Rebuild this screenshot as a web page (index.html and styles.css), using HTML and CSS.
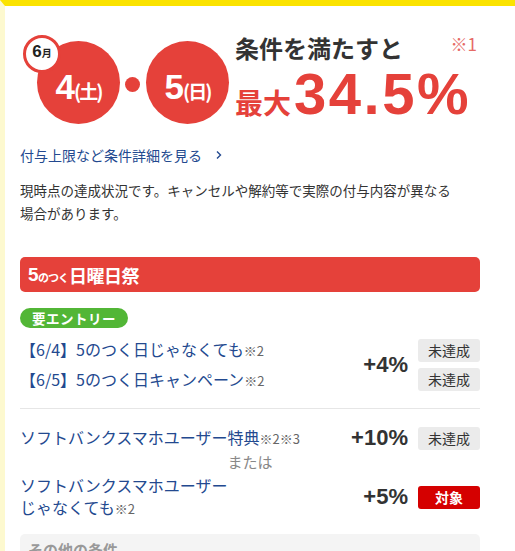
FILE: index.html
```html
<!DOCTYPE html>
<html lang="ja">
<head>
<meta charset="utf-8">
<title>5のつく日曜日祭</title>
<link rel="stylesheet" href="styles.css">
</head>
<body>
<div class="wrap">
  <div class="banner">
    <div class="dates">
      <div class="circle c1">
        <span class="month"><b>6</b>月</span>
        <span class="day"><b>4</b><i>(土)</i></span>
      </div>
      <span class="dot"></span>
      <div class="circle c2">
        <span class="day"><b>5</b><i>(日)</i></span>
      </div>
    </div>
    <div class="headline">
      <div class="cond"><span>条件を満たすと</span><span class="note">※1</span></div>
      <div class="max"><span class="max-label">最大</span><span class="max-num">34.5%</span></div>
    </div>
  </div>

  <a class="detail-link" href="#">付与上限など条件詳細を見る<svg class="chev" width="8" height="10" viewBox="0 0 8 10"><polyline points="2,1.5 5.5,5 2,8.5" fill="none" stroke="#23498f" stroke-width="1.4"/></svg></a>

  <p class="desc">現時点の達成状況です。キャンセルや解約等で実際の付与内容が異なる<br>場合があります。</p>

  <div class="section-head"><span class="five">5</span><span class="small">のつく</span>日曜日祭</div>

  <div class="pill">要エントリー</div>

  <div class="group g1">
    <div class="names">
      <a href="#" class="name">【6/4】5のつく日じゃなくても<span class="ref">※2</span></a>
      <a href="#" class="name">【6/5】5のつく日キャンペーン<span class="ref">※2</span></a>
    </div>
    <div class="rate">+4%</div>
    <div class="badges">
      <span class="badge">未達成</span>
      <span class="badge">未達成</span>
    </div>
  </div>

  <div class="divider"></div>

  <div class="group g2">
    <div class="names">
      <a href="#" class="name">ソフトバンクスマホユーザー特典<span class="ref">※2※3</span></a>
    </div>
    <div class="rate">+10%</div>
    <div class="badges"><span class="badge">未達成</span></div>
  </div>

  <div class="or">または</div>

  <div class="group g3">
    <div class="names">
      <a href="#" class="name two">ソフトバンクスマホユーザー<br>じゃなくても<span class="ref">※2</span></a>
    </div>
    <div class="rate">+5%</div>
    <div class="badges"><span class="badge on">対象</span></div>
  </div>

  <div class="other">その他の条件</div>
</div>
</body>
</html>
```

FILE: styles.css
```css
html, body {
  margin: 0;
  padding: 0;
  overflow: hidden;
  background: #fff;
}
body {
  font-family: "Noto Sans CJK JP", "Noto Sans", sans-serif;
  color: #333;
}
.wrap {
  border-top: 6px solid #fbe300;
  border-left: 5px solid #fdf9cf;
  padding: 0 35px 0 15px;
  min-height: 600px;
}

/* banner */
.banner {
  display: flex;
  align-items: flex-start;
  padding-top: 28px;
  height: 96px;
}
.dates {
  display: flex;
  align-items: center;
  margin-top: 7px;
  margin-left: 17px;
}
.circle {
  position: relative;
  width: 83px;
  height: 83px;
  border-radius: 50%;
  background: #e5413a;
  display: flex;
  align-items: center;
  justify-content: center;
  color: #fff;
}
.day {
  display: flex;
  align-items: baseline;
  margin-top: 8px;
  font-family: "Liberation Sans", Arial, sans-serif;
  font-weight: bold;
}
.day b {
  font-size: 35px;
  letter-spacing: -1px;
}
.day i {
  font-style: normal;
  font-size: 19px;
  font-family: "Noto Sans CJK JP", sans-serif;
  letter-spacing: -2px;
}
.month {
  position: absolute;
  left: -14px;
  top: -6px;
  width: 32px;
  border: 3px solid #e5413a;
  border-radius: 50%;
  background: #fff;
  color: #222;
  display: flex;
  align-items: baseline;
  justify-content: center;
  padding-top: 4px;
  box-sizing: content-box;
  height: 28px;
  font-size: 10px;
  font-weight: bold;
}
.month b {
  font-family: "Liberation Sans", Arial, sans-serif;
  font-size: 17px;
}
.dot {
  width: 15px;
  height: 15px;
  border-radius: 50%;
  background: #e5413a;
  margin: 4px 6px 0 5px;
}
.headline {
  margin-left: 6px;
  width: 243px;
}
.cond {
  display: flex;
  justify-content: space-between;
  align-items: flex-start;
  font-size: 24px;
  line-height: 28px;
  font-weight: bold;
  color: #333;
}
.note {
  font-size: 17px;
  line-height: 16px;
  font-weight: normal;
  color: #e66a66;
  margin-right: 1px;
  margin-top: 2px;
}
.max {
  display: flex;
  align-items: baseline;
  margin-top: 3px;
  color: #e5413a;
  font-weight: bold;
  line-height: 1;
}
.max-label {
  font-size: 28px;
  margin-right: 3px;
}
.max-num {
  font-family: "Liberation Sans", Arial, sans-serif;
  font-size: 58px;
  letter-spacing: 2.5px;
}

/* link + desc */
.detail-link {
  display: flex;
  align-items: center;
  margin-top: 15px;
  font-size: 14px;
  line-height: 20px;
  color: #23498f;
  text-decoration: none;
}
.chev {
  margin-left: 13px;
}
.desc {
  margin: 14px 0 0;
  font-size: 13.5px;
  line-height: 23px;
  color: #333;
}

/* section */
.section-head {
  margin-top: 32px;
  height: 35px;
  border-radius: 5px;
  background: #e5413a;
  color: #fff;
  font-weight: bold;
  font-size: 18px;
  display: flex;
  align-items: center;
  padding-left: 8px;
  letter-spacing: -0.5px;
}
.five {
  font-family: "Liberation Sans", Arial, sans-serif;
  font-size: 19px;
}
.small {
  font-size: 11px;
  margin-top: 4px;
  letter-spacing: -1px;
  margin-right: 1px;
}
.pill {
  display: inline-block;
  margin-top: 16px;
  height: 20px;
  line-height: 20px;
  padding: 0 12px;
  border-radius: 10px;
  background: #52b636;
  color: #fff;
  font-weight: bold;
  font-size: 13.5px;
  letter-spacing: 0.5px;
}

.group {
  display: grid;
  grid-template-columns: 1fr auto 62px;
  column-gap: 10px;
  align-items: center;
}
.g1 { margin-top: 9px; }
.g2 { margin-top: 16px; }
.g3 { margin-top: 3px; }
.names, .badges {
  display: flex;
  flex-direction: column;
  gap: 6px;
}
.name {
  font-size: 16px;
  line-height: 23px;
  color: #23498f;
  text-decoration: none;
  white-space: nowrap;
}
.name.two {
  line-height: 22px;
  white-space: normal;
}
.ref {
  font-size: 13px;
  color: #666;
}
.rate {
  font-family: "Liberation Sans", Arial, sans-serif;
  font-weight: bold;
  font-size: 22px;
  color: #333;
}
.badge {
  height: 23px;
  line-height: 23px;
  border-radius: 3px;
  background: #ebebeb;
  text-align: center;
  font-size: 14px;
  color: #333;
}
.badge.on {
  background: #d50000;
  color: #fff;
  font-weight: bold;
}
.divider {
  margin-top: 16px;
  height: 1px;
  background: #e6e6e6;
}
.or {
  margin-top: 2px;
  text-align: center;
  font-size: 15px;
  line-height: 18px;
  color: #888;
}
.other {
  margin-top: 14px;
  background: #f4f4f4;
  border-radius: 5px;
  padding: 5px 8px;
  font-size: 15px;
  font-weight: bold;
  color: #999;
  height: 60px;
}
```
